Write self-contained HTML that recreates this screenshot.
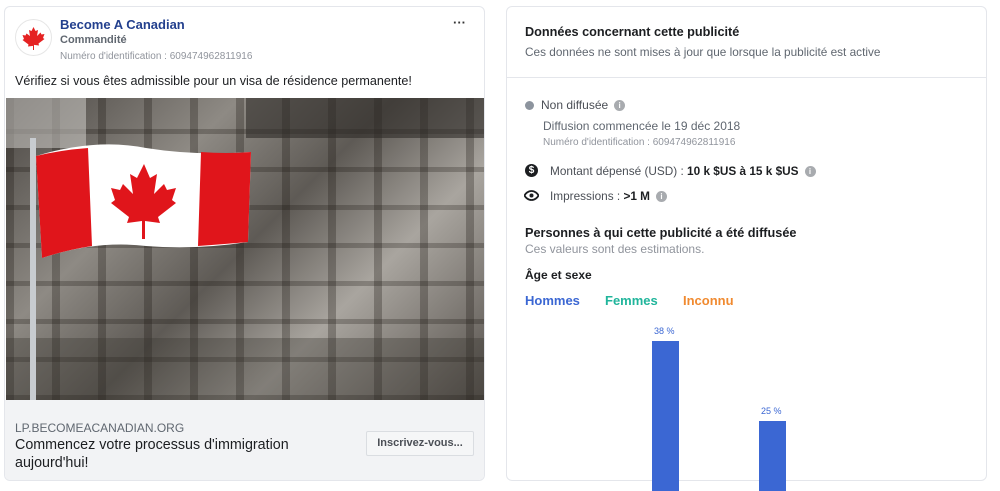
<!DOCTYPE html>
<html><head><meta charset="utf-8"><style>
*{margin:0;padding:0;box-sizing:border-box}
body{width:1000px;height:474px;overflow:hidden;background:#fff;font-family:"Liberation Sans",Arial,sans-serif;position:relative;color:#1c1e21}
.card{position:absolute;border:1px solid #e4e6eb;border-radius:6px;background:#fff}
.a{position:absolute;white-space:nowrap}
.info{display:inline-block;width:11px;height:11px;border-radius:50%;background:#a8abaf;color:#fff;font-size:8px;font-weight:bold;text-align:center;line-height:11px;vertical-align:middle;margin-left:6px}
</style></head><body>
<div class="card" style="left:4px;top:6px;width:481px;height:475px;overflow:hidden">
  <div class="a" style="left:10px;top:12px;width:37px;height:37px;border-radius:50%;border:1px solid #e6e6e6;background:#fff">
    <svg width="35" height="35" viewBox="0 0 35 35"><path d="M17.5 7l2 4 2.5-1-1 6 3.5-3.5 1 2 3-0.5-1.5 4 1.5 1-6 4.5 0.5 2-5-0.6V30h-1v-4.1l-5 0.6 0.5-2-6-4.5 1.5-1-1.5-4 3 .5 1-2L14 16l-1-6 2.5 1z" fill="#e52222"/></svg>
  </div>
  <div class="a" style="left:55px;top:10px;font-size:13px;font-weight:bold;color:#23408e">Become A Canadian</div>
  <div class="a" style="left:55px;top:27px;font-size:11px;font-weight:bold;color:#606770">Commandité</div>
  <div class="a" style="left:55px;top:44px;font-size:10px;color:#90949c">Numéro d'identification : 609474962811916</div>
  <div class="a" style="left:448px;top:8px;font-size:13px;font-weight:bold;color:#333">···</div>
  <div class="a" style="left:10px;top:67px;font-size:12.6px;color:#1c1e21">Vérifiez si vous êtes admissible pour un visa de résidence permanente!</div>
  <div class="a" style="left:1px;top:91px;width:478px;height:302px;overflow:hidden;background:linear-gradient(135deg,#4a4642 0%,#8e8a84 30%,#5e5a55 50%,#a9a59f 70%,#55504b 100%)">
    <div class="a" style="left:0;top:0;width:478px;height:302px;background:repeating-linear-gradient(90deg,rgba(30,25,20,.3) 0 8px,rgba(255,255,255,0) 8px 46px),repeating-linear-gradient(0deg,rgba(20,15,10,.25) 0 5px,rgba(0,0,0,0) 5px 38px)"></div>
    <div class="a" style="left:240px;top:0;width:238px;height:40px;background:#2e2b28;opacity:.6"></div>
    <div class="a" style="left:0;top:0;width:80px;height:50px;background:#d8d6d2;opacity:.5"></div>
    <div class="a" style="left:0;top:240px;width:478px;height:62px;background:#3a3632;opacity:.35"></div>
    <div class="a" style="left:24px;top:40px;width:6px;height:262px;background:#c8ccd0"></div>
    <svg class="a" style="left:30px;top:44px" width="220" height="116" viewBox="0 0 220 116"><path d="M0 14 Q60 -4 110 6 Q160 14 215 10 L212 100 Q160 108 110 104 Q60 98 6 116 Z" fill="#fff"/><path d="M0 14 Q25 8 52 6 L56 104 Q30 108 6 116Z" fill="#e0151b"/><path d="M165 10 Q190 12 215 10 L212 100 Q190 102 162 104Z" fill="#e0151b"/><path d="M108 22l6 14 7-4-3 20 10-10 3 6 9-2-4 12 4 3-18 14 2 6-15-2v18h-3V79l-15 2 2-6-18-14 4-3-4-12 9 2 3-6 10 10-3-20 7 4z" fill="#e0151b"/></svg>
  </div>
  <div class="a" style="left:0;top:393px;width:481px;height:90px;background:#f2f3f5"></div>
  <div class="a" style="left:10px;top:414px;font-size:12px;color:#606770">LP.BECOMEACANADIAN.ORG</div>
  <div class="a" style="left:10px;top:429px;font-size:14.3px;color:#1c1e21;line-height:18px">Commencez votre processus d'immigration<br>aujourd'hui!</div>
  <div class="a" style="left:361px;top:424px;width:108px;height:25px;border:1px solid #dadde1;background:#f5f6f7;border-radius:2px;font-size:11px;font-weight:bold;color:#4b4f56;text-align:center;line-height:23px">Inscrivez-vous...</div>
</div>
<div class="card" style="left:506px;top:6px;width:481px;height:475px">
  <div class="a" style="left:18px;top:18px;font-size:12.7px;font-weight:bold">Données concernant cette publicité</div>
  <div class="a" style="left:18px;top:38px;font-size:11.8px;color:#606770">Ces données ne sont mises à jour que lorsque la publicité est active</div>
  <div class="a" style="left:0;top:70px;width:479px;height:1px;background:#e4e6eb"></div>
  <div class="a" style="left:18px;top:94px;width:9px;height:9px;border-radius:50%;background:#8d949e"></div>
  <div class="a" style="left:34px;top:91px;font-size:12px;color:#4b4f56">Non diffusée<span class="info">i</span></div>
  <div class="a" style="left:36px;top:112px;font-size:12px;color:#606770">Diffusion commencée le 19 déc 2018</div>
  <div class="a" style="left:36px;top:130px;font-size:10px;color:#90949c">Numéro d'identification : 609474962811916</div>
  <div class="a" style="left:18px;top:157px;width:13px;height:13px;border-radius:50%;background:#1c1e21;color:#fff;font-size:10px;font-weight:bold;text-align:center;line-height:13px">$</div>
  <div class="a" style="left:43px;top:157px;font-size:11.8px;color:#4b4f56">Montant dépensé (USD) : <b style="color:#1c1e21">10 k $US à 15 k $US</b><span class="info">i</span></div>
  <svg class="a" style="left:17px;top:183px" width="15" height="11" viewBox="0 0 15 11"><path d="M7.5 1C4 1 1.5 3.5 .5 5.5 1.5 7.5 4 10 7.5 10S13.5 7.5 14.5 5.5C13.5 3.5 11 1 7.5 1z" fill="none" stroke="#1c1e21" stroke-width="1.8"/><circle cx="7.5" cy="5.5" r="2" fill="#1c1e21"/></svg>
  <div class="a" style="left:43px;top:182px;font-size:11.8px;color:#4b4f56">Impressions : <b style="color:#1c1e21">&gt;1 M</b><span class="info">i</span></div>
  <div class="a" style="left:18px;top:219px;font-size:12.7px;font-weight:bold">Personnes à qui cette publicité a été diffusée</div>
  <div class="a" style="left:18px;top:235px;font-size:12px;color:#90949c">Ces valeurs sont des estimations.</div>
  <div class="a" style="left:18px;top:261px;font-size:12px;font-weight:bold">Âge et sexe</div>
  <div class="a" style="left:18px;top:286px;font-size:13px;font-weight:bold;color:#3b67d3">Hommes</div>
  <div class="a" style="left:98px;top:286px;font-size:13px;font-weight:bold;color:#20b59b">Femmes</div>
  <div class="a" style="left:176px;top:286px;font-size:13px;font-weight:bold;color:#f08a30">Inconnu</div>
  <div class="a" style="left:147px;top:319px;font-size:9px;color:#3b67d3">38 %</div>
  <div class="a" style="left:145px;top:334px;width:27px;height:150px;background:#3b67d3"></div>
  <div class="a" style="left:254px;top:399px;font-size:9px;color:#3b67d3">25 %</div>
  <div class="a" style="left:252px;top:414px;width:27px;height:70px;background:#3b67d3"></div>
</div>
</body></html>
